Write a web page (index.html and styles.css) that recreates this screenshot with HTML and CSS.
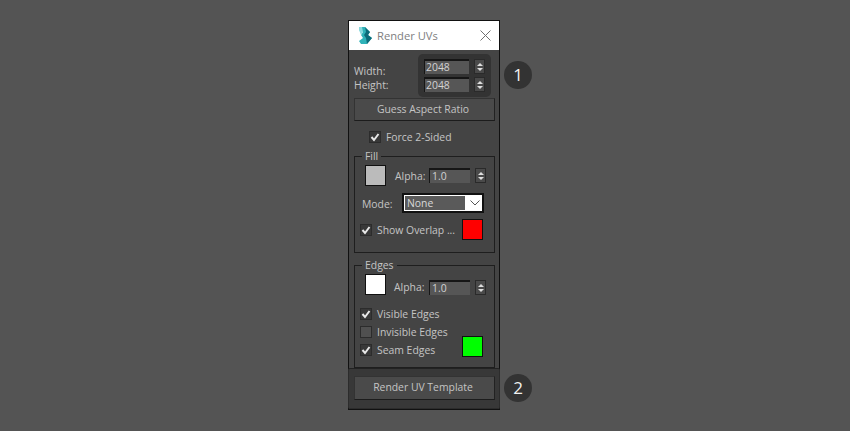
FILE: index.html
```html
<!DOCTYPE html>
<html lang="en">
<head>
  <meta charset="UTF-8" />
  <title>Render UVs</title>
  <link rel="stylesheet" href="styles.css">
</head>
<body>
  <div class="window">
    <div class="titlebar">
      <svg class="logo" width="14" height="17" viewBox="0 0 14 17">
        <path d="M1 0 L7 0 L12 5 L10 8 L14 11 L9 17 L3 17 L1 14 L5 11 L3 8 L5 5 L1 3 Z" fill="#2fb2b8"/>
        <path d="M7 0 L12 5 L10 8 L14 11 L9 17 L8 11 L6 8 L8 5 Z" fill="#0d6c7a"/>
        <path d="M1 0 L4 0 L5 5 L3 8 L1 3 Z" fill="#8adade"/>
      </svg>
      <span class="title">Render UVs</span>
      <svg class="close" width="11" height="11" viewBox="0 0 11 11">
        <path d="M0.5 0.5 L10.5 10.5 M10.5 0.5 L0.5 10.5" stroke="#707070" stroke-width="1" fill="none"/>
      </svg>
    </div>

    <div class="size-row">
      <div class="size-labels">
        <span>Width:</span>
        <span>Height:</span>
      </div>
      <div class="size-group">
        <div class="spin-row">
          <div class="field size-field">2048</div>
          <div class="spinner"><i class="up"></i><i class="down"></i></div>
        </div>
        <div class="spin-row">
          <div class="field size-field">2048</div>
          <div class="spinner"><i class="up"></i><i class="down"></i></div>
        </div>
      </div>
    </div>

    <div class="button">Guess Aspect Ratio</div>

    <label class="check force">
      <span class="box on"><svg width="10" height="10" viewBox="0 0 10 10"><path d="M1.5 5 L4 8 L8.5 2" stroke="#e8e8e8" stroke-width="2" fill="none"/></svg></span>
      Force 2-Sided
    </label>

    <fieldset class="group fill-group">
      <legend>Fill</legend>
      <div class="alpha-row">
        <div class="swatch grey"></div>
        <span class="alpha-label">Alpha:</span>
        <div class="field alpha-field">1.0</div>
        <div class="spinner"><i class="up"></i><i class="down"></i></div>
      </div>
      <div class="mode-row">
        <span class="mode-label">Mode:</span>
        <div class="select">
          <span class="select-value">None</span>
          <svg class="select-arrow" width="10" height="6" viewBox="0 0 10 6"><path d="M0.5 0.5 L5 5 L9.5 0.5" stroke="#555" stroke-width="1" fill="none"/></svg>
        </div>
      </div>
      <div class="overlap-row">
        <label class="check">
          <span class="box on"><svg width="10" height="10" viewBox="0 0 10 10"><path d="M1.5 5 L4 8 L8.5 2" stroke="#e8e8e8" stroke-width="2" fill="none"/></svg></span>
          Show Overlap ...
        </label>
        <div class="swatch red"></div>
      </div>
    </fieldset>

    <fieldset class="group edges-group">
      <legend>Edges</legend>
      <div class="alpha-row edge-alpha-row">
        <div class="swatch white"></div>
        <span class="alpha-label">Alpha:</span>
        <div class="field alpha-field">1.0</div>
        <div class="spinner"><i class="up"></i><i class="down"></i></div>
      </div>
      <div class="edge-options">
        <label class="check">
          <span class="box on"><svg width="10" height="10" viewBox="0 0 10 10"><path d="M1.5 5 L4 8 L8.5 2" stroke="#e8e8e8" stroke-width="2" fill="none"/></svg></span>
          Visible Edges
        </label>
        <label class="check">
          <span class="box"></span>
          Invisible Edges
        </label>
        <div class="seam-row">
          <label class="check">
            <span class="box on"><svg width="10" height="10" viewBox="0 0 10 10"><path d="M1.5 5 L4 8 L8.5 2" stroke="#e8e8e8" stroke-width="2" fill="none"/></svg></span>
            Seam Edges
          </label>
          <div class="swatch green"></div>
        </div>
      </div>
    </fieldset>

    <div class="render-bar">
      <div class="button render-button">Render UV Template</div>
    </div>

    <div class="badge badge-one">1</div>
    <div class="badge badge-two">2</div>
  </div>
</body>
</html>
```

FILE: styles.css
```css
body {
  margin: 0;
  height: 431px;
  overflow: hidden;
  background: #545454;
  font-family: "Open Sans", "Liberation Sans", sans-serif;
  font-size: 10.4px;
  color: #c4c4c4;
}

.window {
  position: relative;
  box-sizing: border-box;
  width: 152px;
  height: 390px;
  margin: 20px 0 0 348px;
  background: #444;
  border: 1px solid #111;
}

.titlebar {
  display: flex;
  align-items: center;
  height: 29px;
  padding: 0 8px 0 9px;
  background: #fff;
}

.logo {
  flex: none;
}

.title {
  flex: 1;
  margin-left: 5px;
  font-size: 11.2px;
  color: #808080;
}

.size-row {
  display: flex;
  box-sizing: border-box;
  height: 48px;
  padding: 4px 0 0 5px;
}

.size-labels {
  display: flex;
  flex-direction: column;
  width: 64px;
  padding-top: 10px;
  line-height: 14px;
}

.size-group {
  display: flex;
  flex-direction: column;
  gap: 3px;
  box-sizing: border-box;
  width: 73px;
  height: 43px;
  padding: 5px 6px;
  background: #333;
  border-radius: 5px;
}

.spin-row {
  display: flex;
  gap: 5px;
}

.field {
  box-sizing: border-box;
  background: #565656;
  border-top: 2px solid #161616;
  border-left: 1px solid #161616;
  padding-left: 1px;
  color: #d2d2d2;
}

.size-field {
  width: 46px;
  height: 15px;
  line-height: 12px;
}

.spinner {
  display: flex;
  flex-direction: column;
  align-items: center;
  justify-content: center;
  gap: 2px;
  box-sizing: border-box;
  width: 11px;
  height: 15px;
  background: #4a4a4a;
  border: 1px solid #2a2a2a;
}

.spinner i {
  width: 0;
  height: 0;
  border-left: 3px solid transparent;
  border-right: 3px solid transparent;
}

.spinner .up {
  border-bottom: 3px solid #ddd;
}

.spinner .down {
  border-top: 3px solid #ddd;
}

.button {
  box-sizing: border-box;
  width: 141px;
  height: 23px;
  margin-left: 5px;
  padding-right: 3px;
  line-height: 21px;
  text-align: center;
  background: #4a4a4a;
  border: 1px solid #333;
  border-bottom-color: #1c1c1c;
  border-right-color: #222;
}

.check {
  display: flex;
  align-items: center;
  gap: 5px;
  height: 12px;
}

.box {
  flex: none;
  display: flex;
  align-items: center;
  justify-content: center;
  box-sizing: border-box;
  width: 12px;
  height: 12px;
  background: #505050;
  border: 1px solid #2c2c2c;
}

.box.on {
  background: #383838;
}

.force {
  margin: 10px 0 0 20px;
}

.group {
  box-sizing: border-box;
  width: 141px;
  margin: 0 0 0 5px;
  padding: 2px 0 0 10px;
  border: 1px solid #1e1e1e;
}

.group legend {
  padding: 0 3px;
  margin-left: -3px;
  line-height: 14px;
}

.fill-group {
  height: 104px;
  margin-top: 6px;
}

.edges-group {
  height: 110px;
  margin-top: 5px;
}

.alpha-row {
  display: flex;
  align-items: center;
  height: 21px;
}

.swatch {
  flex: none;
  box-sizing: border-box;
  width: 21px;
  height: 21px;
  border: 1px solid #111;
}

.grey {
  background: #bbb;
}

.white {
  background: #fff;
}

.red {
  background: #f00;
}

.green {
  background: #0f0;
  margin-top: -7px;
}

.alpha-label {
  width: 34px;
  margin-left: 9px;
}

.alpha-field {
  width: 41px;
  height: 15px;
  padding-left: 2px;
  line-height: 13px;
}

.alpha-row .spinner {
  margin-left: 5px;
}

.edge-alpha-row {
  align-items: flex-end;
}

.edge-alpha-row .alpha-label {
  width: 35px;
  margin-left: 8px;
  line-height: 15px;
}

.mode-row {
  display: flex;
  align-items: center;
  height: 20px;
  margin: 7px 0 0 -3px;
}

.mode-label {
  width: 40px;
  padding-top: 2px;
}

.select {
  display: flex;
  align-items: center;
  box-sizing: border-box;
  width: 82px;
  height: 20px;
  background: #fff;
  border: 2px solid #111;
}

.select-value {
  flex: none;
  box-sizing: border-box;
  width: 60px;
  height: 14px;
  margin-left: 1px;
  padding-left: 2px;
  line-height: 14px;
  background: #5a5a5a;
  color: #d8d8d8;
}

.select-arrow {
  margin-left: 5px;
}

.overlap-row {
  display: flex;
  align-items: center;
  justify-content: space-between;
  width: 123px;
  height: 21px;
  margin: 6px 0 0 -5px;
}

.edge-options {
  display: flex;
  flex-direction: column;
  gap: 6px;
  margin: 13px 0 0 -5px;
}

.seam-row {
  display: flex;
  align-items: center;
  justify-content: space-between;
  width: 123px;
  height: 12px;
}

.render-bar {
  box-sizing: border-box;
  height: 41px;
  margin: 0 -1px;
  padding-top: 7px;
  background: #383838;
  border: 1px solid #2c2c2c;
  border-top-color: #222;
  border-radius: 2px;
}

.render-button {
  height: 24px;
  line-height: 20px;
}

.badge {
  position: absolute;
  left: 155px;
  width: 28px;
  height: 28px;
  line-height: 27px;
  text-align: center;
  border-radius: 50%;
  background: #333;
  color: #f0f0f0;
  font-size: 17px;
}

.badge-one {
  top: 40px;
}

.badge-two {
  top: 353px;
}
```
